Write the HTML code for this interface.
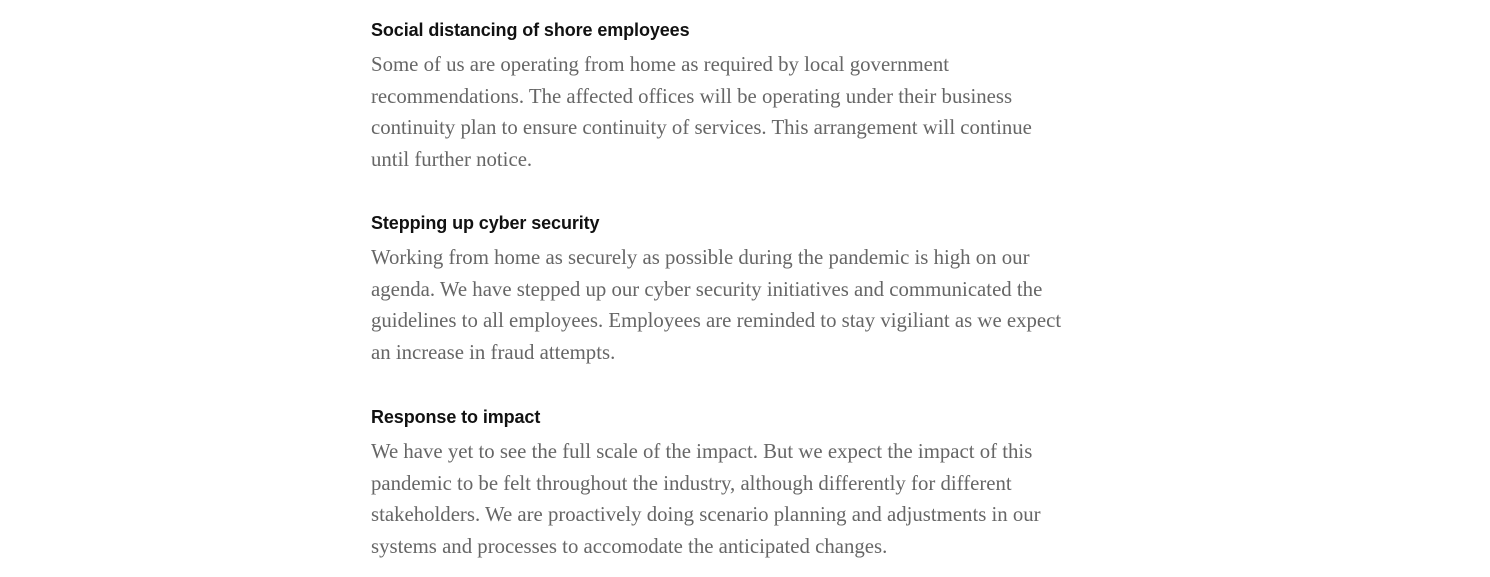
<!DOCTYPE html>
<html><head><meta charset="utf-8"><style>
body{margin:0;background:#fff;width:1490px;height:577px;overflow:hidden;position:relative}
.s{position:absolute;left:371px;width:800px}
h3{margin:0;font:bold 18px/22px "Liberation Sans",sans-serif;color:#111;letter-spacing:-0.1px}
p{margin:8px 0 0;font:20.8px/31.6px "Liberation Serif",serif;color:#666;white-space:nowrap}
</style></head><body>
<div class="s" style="top:19px"><h3>Social distancing of shore employees</h3>
<p>Some of us are operating from home as required by local government<br>recommendations. The affected offices will be operating under their business<br>continuity plan to ensure continuity of services. This arrangement will continue<br>until further notice.</p></div>
<div class="s" style="top:212px"><h3>Stepping up cyber security</h3>
<p>Working from home as securely as possible during the pandemic is high on our<br>agenda. We have stepped up our cyber security initiatives and communicated the<br>guidelines to all employees. Employees are reminded to stay vigiliant as we expect<br>an increase in fraud attempts.</p></div>
<div class="s" style="top:406px"><h3>Response to impact</h3>
<p>We have yet to see the full scale of the impact. But we expect the impact of this<br>pandemic to be felt throughout the industry, although differently for different<br>stakeholders. We are proactively doing scenario planning and adjustments in our<br>systems and processes to accomodate the anticipated changes.</p></div>
</body></html>
